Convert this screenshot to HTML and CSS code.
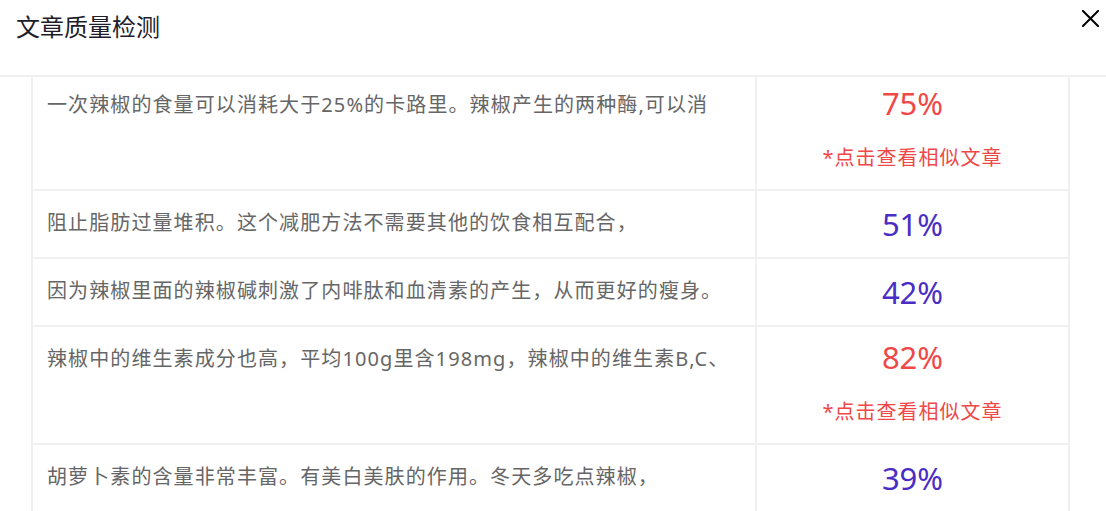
FILE: index.html
```html
<!DOCTYPE html>
<html lang="zh-CN">
<head>
<meta charset="utf-8">
<title>文章质量检测</title>
<link rel="stylesheet" href="styles.css">
</head>
<body>
<div class="dialog">
  <div class="dialog-header">
    <div class="dialog-title">文章质量检测</div>
    <button class="close-btn" aria-label="关闭">
      <svg width="17" height="17" viewBox="0 0 17 17"><path d="M1 1 L16 16 M16 1 L1 16" stroke="#000" stroke-width="2" fill="none" stroke-linecap="square"/></svg>
    </button>
  </div>
  <div class="dialog-body">
    <div class="result-list">
      <div class="row">
        <div class="text-cell">一次辣椒的食量可以消耗大于25%的卡路里。辣椒产生的两种酶,可以消</div>
        <div class="score-cell">
          <div class="score score-high">75%</div>
          <a class="similar-link">*点击查看相似文章</a>
        </div>
      </div>
      <div class="row">
        <div class="text-cell">阻止脂肪过量堆积。这个减肥方法不需要其他的饮食相互配合，</div>
        <div class="score-cell">
          <div class="score score-low">51%</div>
        </div>
      </div>
      <div class="row">
        <div class="text-cell">因为辣椒里面的辣椒碱刺激了内啡肽和血清素的产生，从而更好的瘦身。</div>
        <div class="score-cell">
          <div class="score score-low">42%</div>
        </div>
      </div>
      <div class="row">
        <div class="text-cell">辣椒中的维生素成分也高，平均100g里含198mg，辣椒中的维生素B,C、</div>
        <div class="score-cell">
          <div class="score score-high">82%</div>
          <a class="similar-link">*点击查看相似文章</a>
        </div>
      </div>
      <div class="row row-last">
        <div class="text-cell">胡萝卜素的含量非常丰富。有美白美肤的作用。冬天多吃点辣椒，</div>
        <div class="score-cell">
          <div class="score score-low">39%</div>
        </div>
      </div>
    </div>
  </div>
</div>
</body>
</html>
```
FILE: styles.css
```css
* { box-sizing: border-box; }
html, body {
  margin: 0;
  padding: 0;
  background: #fff;
}
body {
  font-family: "Noto Sans", "Noto Sans CJK SC", sans-serif;
  width: 1106px;
  height: 511px;
  overflow: hidden;
}
.dialog {
  width: 1106px;
  height: 511px;
  display: flex;
  flex-direction: column;
}
.dialog-header {
  height: 77px;
  flex: none;
  border-bottom: 2px solid #f0f0f0;
  display: flex;
  justify-content: space-between;
  align-items: flex-start;
  padding: 0 7px 0 16px;
}
.dialog-title {
  font-size: 24px;
  line-height: 32px;
  padding-top: 10px;
  color: #1d1d2b;
  font-family: "Noto Sans CJK SC", sans-serif;
}
.close-btn {
  margin-top: 10px;
  padding: 0;
  border: 0;
  background: transparent;
  width: 17px;
  height: 17px;
  display: block;
}
.close-btn svg { display: block; }
.dialog-body {
  flex: 1;
  overflow: hidden;
  padding-left: 31px;
}
.result-list {
  width: 1039px;
  margin-top: -4px;
  border-left: 2px solid #f0f0f0;
  border-right: 2px solid #f0f0f0;
}
.row {
  display: flex;
  border-bottom: 2px solid #f0f0f0;
}
.text-cell {
  width: 724px;
  flex: none;
  border-right: 2px solid #f0f0f0;
  padding: 12px 14px 14px;
  font-size: 20px;
  letter-spacing: 1.1px;
  line-height: 40px;
  color: #666;
  white-space: nowrap;
  overflow: hidden;
}
.score-cell {
  flex: 1;
  padding: 10px 0;
  display: flex;
  flex-direction: column;
  justify-content: center;
  text-align: center;
}
.score {
  font-size: 31px;
  line-height: 40px;
}
.score-high { color: #f04747; }
.score-low { color: #4a2dc4; }
.similar-link {
  display: block;
  margin-top: 14px;
  font-size: 20px;
  letter-spacing: 1px;
  line-height: 42px;
  color: #f04747;
  cursor: pointer;
}
```
